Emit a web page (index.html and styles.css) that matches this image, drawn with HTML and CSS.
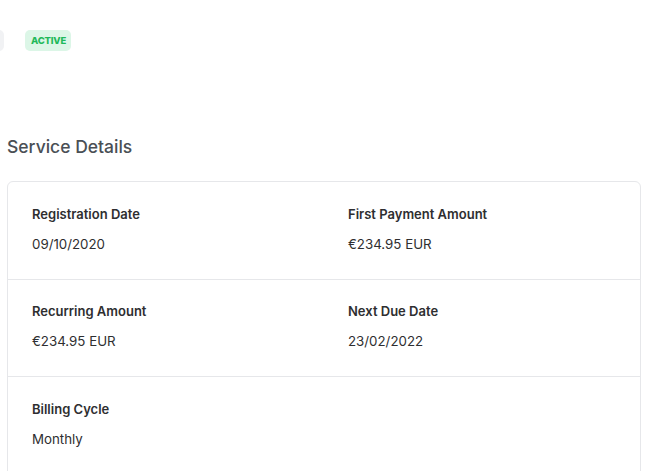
FILE: index.html
```html
<!DOCTYPE html>
<html>
<head>
<meta charset="utf-8">
<link rel="stylesheet" href="styles.css">
</head>
<body>
<div class="page">
  <div class="status-row">
    <span class="ghost-btn"></span>
    <span class="badge">ACTIVE</span>
  </div>
  <h2 class="title">Service Details</h2>
  <div class="card">
    <div class="row">
      <div class="cell"><div class="label">Registration Date</div><div class="value">09/10/2020</div></div>
      <div class="cell"><div class="label">First Payment Amount</div><div class="value">€234.95 EUR</div></div>
    </div>
    <div class="row">
      <div class="cell"><div class="label">Recurring Amount</div><div class="value">€234.95 EUR</div></div>
      <div class="cell"><div class="label">Next Due Date</div><div class="value">23/02/2022</div></div>
    </div>
    <div class="row">
      <div class="cell"><div class="label">Billing Cycle</div><div class="value">Monthly</div></div>
      <div class="cell"></div>
    </div>
  </div>
</div>
</body>
</html>
```
FILE: styles.css
```css
html, body {
  margin: 0;
  padding: 0;
  background: #ffffff;
}
html {
  height: 471px;
  overflow: hidden;
}
body {
  font-family: "Inter", "Noto Sans", sans-serif;
  color: #2d2d2d;
}
.page {
  padding: 30px 11px 0 7px;
}
.status-row {
  display: flex;
  align-items: center;
  gap: 21px;
  height: 21px;
  margin-left: -27px;
}
.ghost-btn {
  width: 24px;
  height: 21px;
  background: #f1f2f4;
  border-radius: 5px;
}
.badge {
  display: inline-flex;
  align-items: center;
  height: 21px;
  padding: 0 5px 0 6px;
  background: #dcf6e7;
  color: #1fb95a;
  font-size: 9.5px;
  font-weight: 800;
  border-radius: 5px;
  letter-spacing: -0.2px;
}
.title {
  margin: 85px 0 0 0;
  font-size: 17.5px;
  font-weight: 500;
  line-height: 22px;
  color: #4a4f55;
}
.card {
  margin-top: 23px;
  border: 1px solid #e6e7ea;
  border-radius: 6px;
  height: 320px;
}
.row {
  display: grid;
  grid-template-columns: 1fr 1fr;
  border-bottom: 1px solid #e6e7ea;
}
.row:last-child {
  border-bottom: none;
}
.cell {
  padding: 21.5px 24px 25px 24px;
  height: 50px;
}
.label {
  font-size: 13px;
  font-weight: 600;
  line-height: 20px;
  color: #2e2e30;
}
.value {
  margin-top: 10px;
  font-size: 13.3px;
  font-weight: 400;
  line-height: 20px;
  color: #2e2e30;
}
```
